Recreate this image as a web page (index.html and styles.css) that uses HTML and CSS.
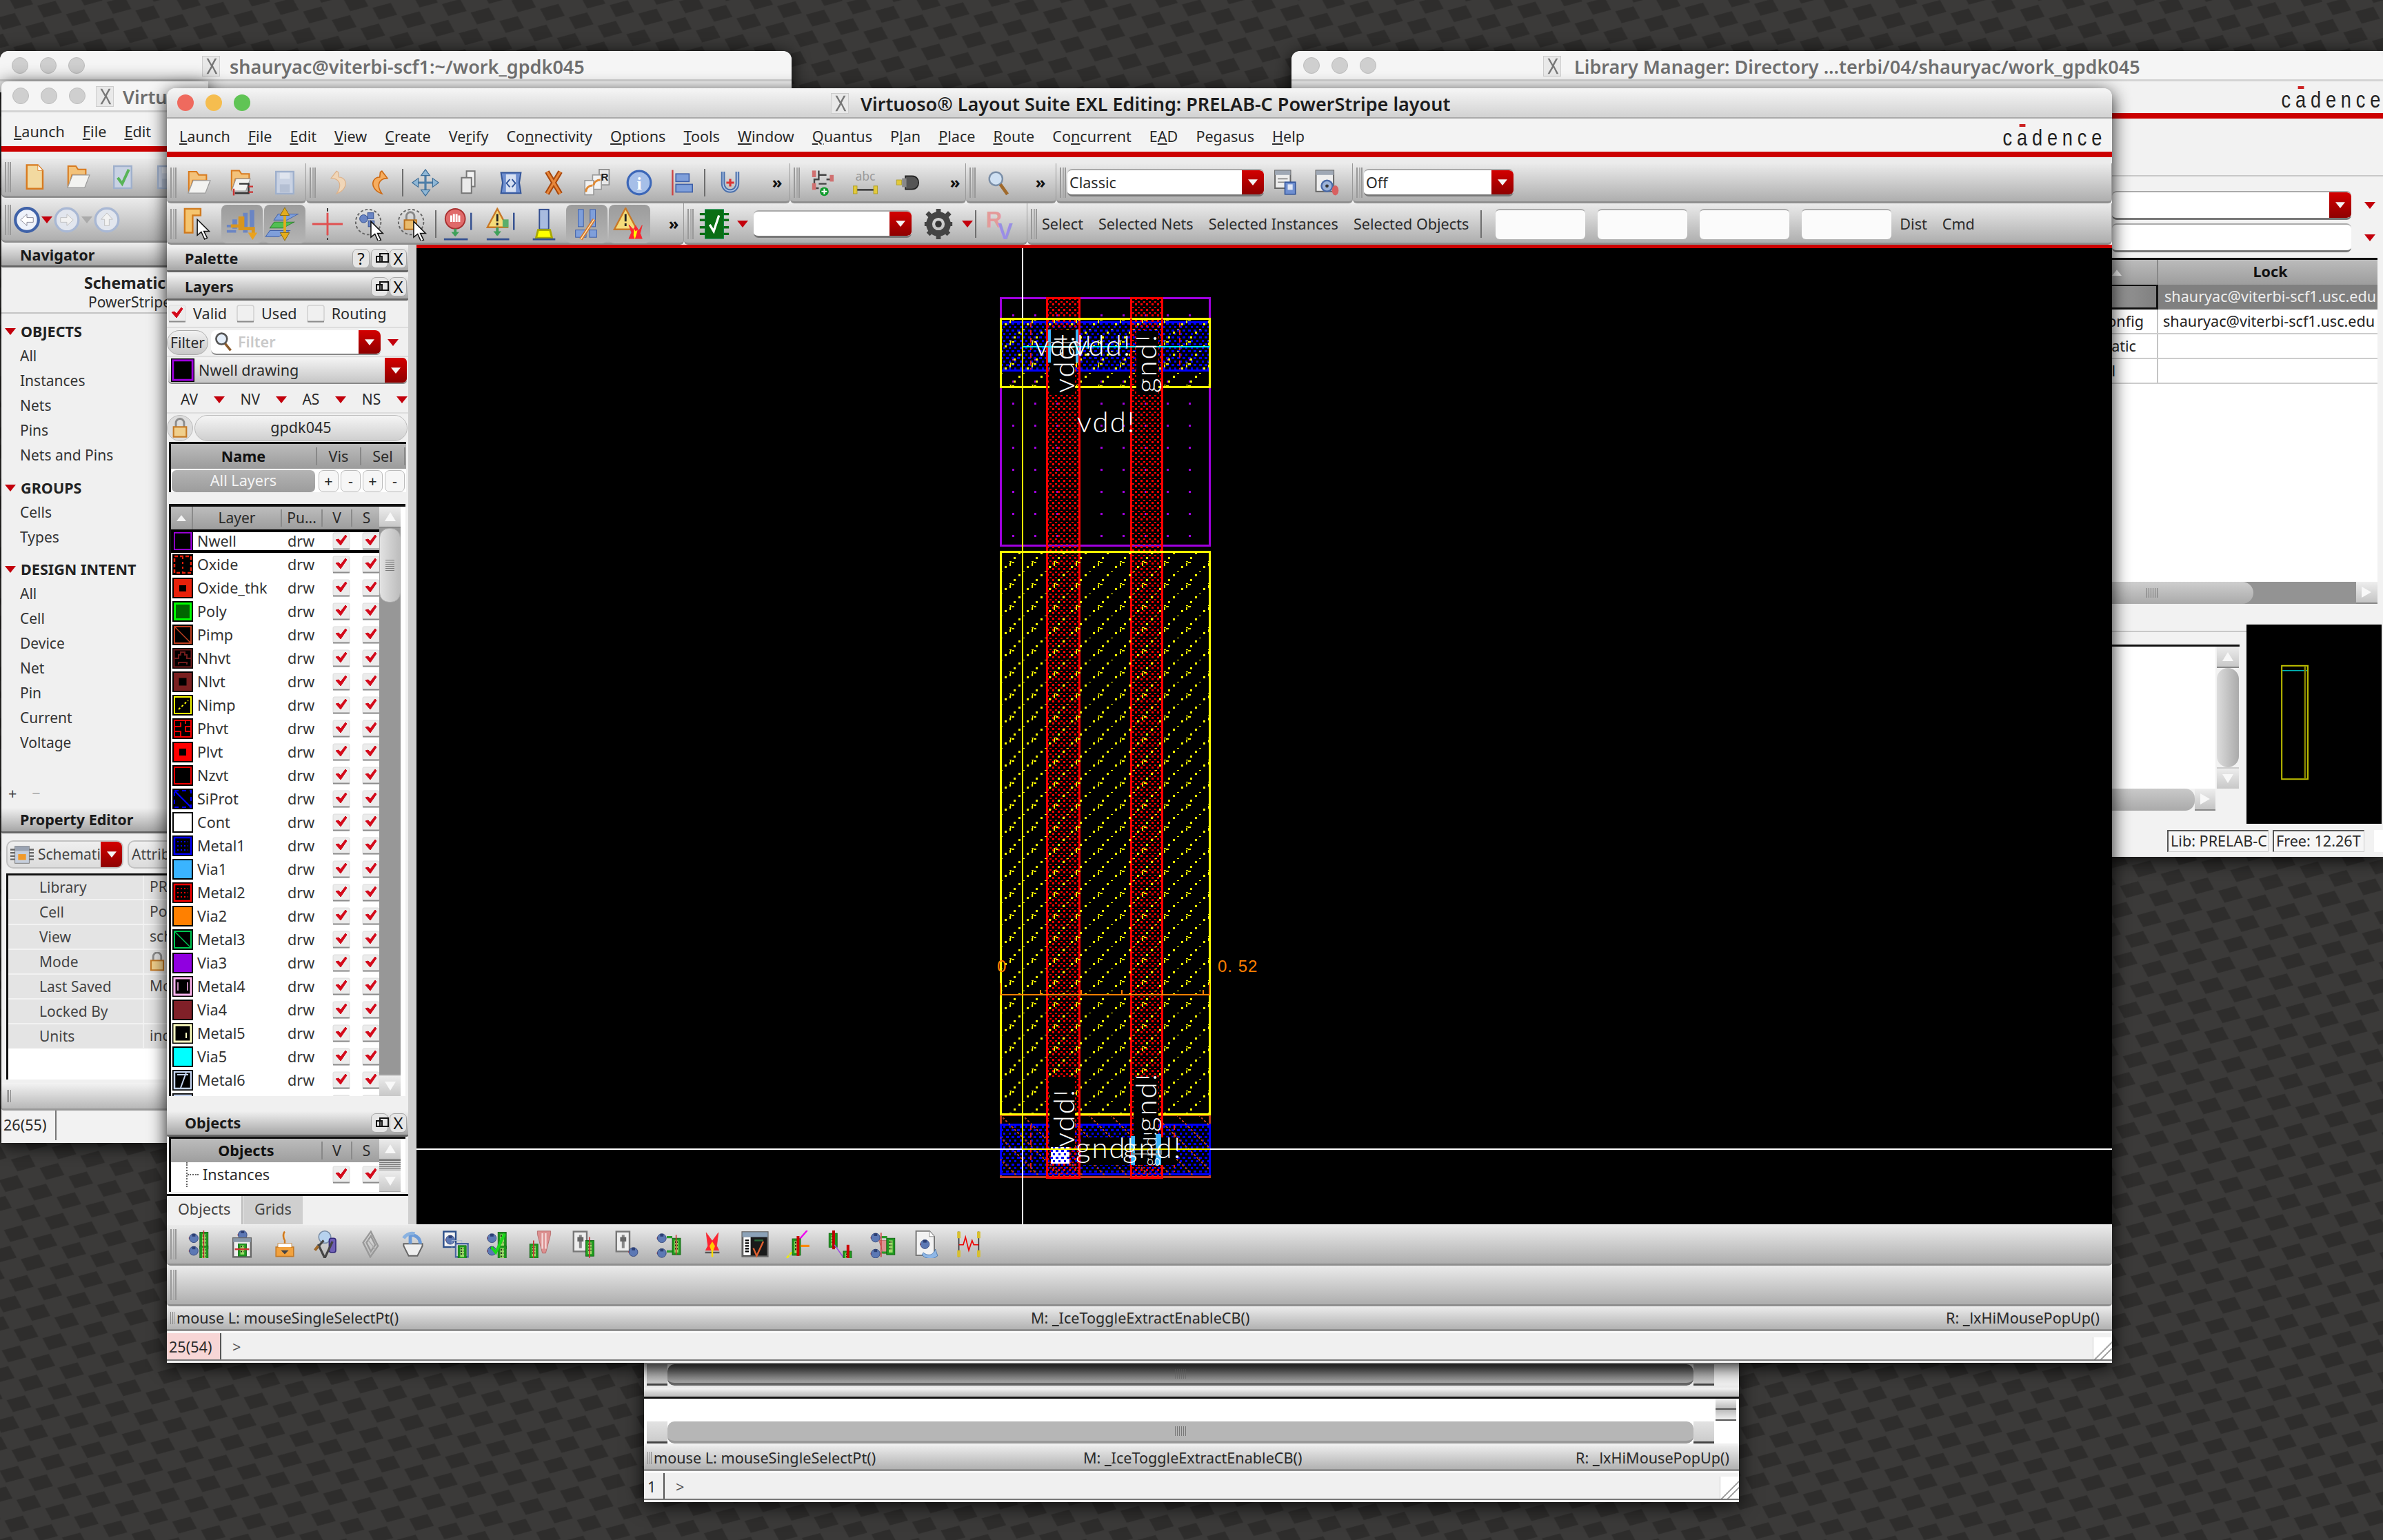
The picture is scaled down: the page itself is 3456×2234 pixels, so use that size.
FILE: index.html
```html
<!DOCTYPE html>
<html lang="en">
<head>
<meta charset="utf-8">
<title>Virtuoso Layout Suite EXL Editing</title>
<link rel="stylesheet" href="styles.css">
</head>
<body>
<svg class="defs" width="0" height="0">
<defs>
<pattern id="wall" width="100" height="100" patternUnits="userSpaceOnUse" patternTransform="matrix(.417 .123 -.173 .3 2764.5 1983.8)">
<rect width="100" height="100" fill="#3b3a39"/><polygon points="10,50 56,7 95.5,48.5 49.5,91.5" fill="#2e2d2c"/>
</pattern>
<g id="cur"><path d="M0 0v24l6-5 5 11 4-2-5-10h8z" fill="#fff" stroke="#111" stroke-width="1.6"/></g>
<g id="chp"><rect x="0" y="0" width="15" height="30" fill="#1f9a1f" stroke="#0a5a0a"/><rect x="4" y="4" width="7" height="22" fill="#9fdc6a"/><path d="M5 7h2M9 7h1M5 13h2M9 13h1M5 19h2M9 19h1" stroke="#111" stroke-width="3"/></g>
<g id="txr"><path d="M0 8h16" stroke="#c33" stroke-width="3"/><circle cx="9" cy="8" r="8" fill="#5c78b4" stroke="#2c3f74"/><rect x="6" y="0" width="6" height="5" fill="#2c3f74"/></g>
<g id="mag"><circle cx="16" cy="15" r="12" fill="#cfe0f2" stroke="#7b8fa8" stroke-width="3"/><path d="M24 25l13 18" stroke="#a06a2c" stroke-width="6"/></g>
</defs>
<symbol id="doc" viewBox="0 0 50 50"><path d="M11 3h20l9 10v33H11z" fill="#f2d9a0" stroke="#d87a1e" stroke-width="3"/><path d="M31 3v10h9" fill="#fff" stroke="#d87a1e"/></symbol>
<symbol id="folder" viewBox="0 0 50 50"><path d="M6 5h14l4 6h14v10L13 21 8 42H6z" fill="#f3c27a" stroke="#d87a1e" stroke-width="2.5"/><path d="M14 21h31l-9 23H5z" fill="#f3f3f1" stroke="#9a9a9a" stroke-width="1.5"/></symbol>
<symbol id="folderc" viewBox="0 0 50 50"><path d="M6 3h14l4 6h14v9H13L8 38H6z" fill="#f3c27a" stroke="#d87a1e" stroke-width="2.5"/><path d="M14 18h26l-8 22H6z" fill="#f3f3f1" stroke="#9a9a9a" stroke-width="1.5"/><path d="M20 27h17v17H26M12 44h14" fill="none" stroke="#333" stroke-width="3"/><path d="M37 32h8M37 42h8M10 36v12" stroke="#c33" stroke-width="3"/></symbol>
<symbol id="floppy" viewBox="0 0 50 50"><rect x="9" y="5" width="32" height="40" fill="#c9d2e3" stroke="#9fb0cc" stroke-width="3"/><rect x="16" y="7" width="18" height="11" fill="#dfe4ee"/><rect x="16" y="28" width="18" height="15" fill="#b4bfd3"/></symbol>
<symbol id="check" viewBox="0 0 50 50"><rect x="9" y="5" width="32" height="40" fill="#c9d2e3" stroke="#9fb0cc" stroke-width="3"/><path d="M16 26l8 11 12-26" fill="none" stroke="#58b458" stroke-width="5"/></symbol>
<symbol id="undo" viewBox="0 0 50 50"><path d="M22 4L12 17l7 1c10 4 12 14 3 27 14-5 19-16 15-24-3-5-8-6-11-6l-1-9z" fill="#f0d6b8" stroke="#ddb188" stroke-width="1.5"/></symbol>
<symbol id="redo" viewBox="0 0 50 50"><path d="M28 4l10 13-7 1c-10 4-12 14-3 27-14-5-19-16-15-24 3-5 8-6 11-6l1-9z" fill="#f6ad5f" stroke="#cd6a14" stroke-width="2"/></symbol>
<symbol id="move" viewBox="0 0 50 50"><path d="M25 8v34M8 25h34" stroke="#4d7ea8" stroke-width="4"/><path d="M25 1l8 11H17zM25 49l8-11H17zM1 25l11-8v16zM49 25l-11-8v16z" fill="#8fb7d6" stroke="#3d6e98" stroke-width="1.5"/></symbol>
<symbol id="copy" viewBox="0 0 50 50"><rect x="22" y="4" width="15" height="28" fill="#f4f4f4" stroke="#777" stroke-width="2.5"/><rect x="13" y="16" width="18" height="28" fill="#eaeaea" stroke="#777" stroke-width="2.5"/></symbol>
<symbol id="stretch" viewBox="0 0 50 50"><path d="M7 7h36l-3 18 3 19H7l3-19z" fill="#6f8fd0" stroke="#33559a" stroke-width="2.5"/><path d="M16 10h18v32H16z" fill="#d7e0f2"/><path d="M23 19l-6 7 6 7M27 19l6 7-6 7" fill="none" stroke="#33559a" stroke-width="2.5"/></symbol>
<symbol id="delete" viewBox="0 0 50 50"><path d="M13 5l24 40M37 5L13 45" stroke="#a8470c" stroke-width="9"/><path d="M13 5l24 40M37 5L13 45" stroke="#e8873a" stroke-width="4"/></symbol>
<symbol id="copyr" viewBox="0 0 50 50"><rect x="30" y="1" width="18" height="28" fill="#e8e8e8" stroke="#888" stroke-width="2"/><rect x="18" y="11" width="16" height="26" fill="#f2f2f2" stroke="#999" stroke-width="2"/><rect x="4" y="21" width="16" height="26" fill="#f2f2f2" stroke="#999" stroke-width="2"/><path d="M6 42c0-8 6-12 12-12M20 30c0-6 6-10 12-10" fill="none" stroke="#e08a35" stroke-width="3.5"/><text x="33" y="21" class="tx-r">R</text></symbol>
<symbol id="info" viewBox="0 0 50 50"><circle cx="25" cy="25" r="21" fill="#a6bfe8" stroke="#3c67b8" stroke-width="4"/><text x="25" y="37" class="tx-i">i</text></symbol>
<symbol id="align" viewBox="0 0 50 50"><path d="M8 2v46" stroke="#c44" stroke-width="3"/><rect x="14" y="9" width="24" height="14" fill="#7f9fda" stroke="#3e5fa8" stroke-width="2"/><rect x="14" y="28" width="30" height="14" fill="#7f9fda" stroke="#3e5fa8" stroke-width="2"/></symbol>
<symbol id="snap" viewBox="0 0 50 50"><path d="M12 5v22a13 13 0 0 0 26 0V5" fill="none" stroke="#4a70ac" stroke-width="7"/><path d="M12 5v22a13 13 0 0 0 26 0V5" fill="none" stroke="#b3c7e6" stroke-width="2"/><path d="M25 18v14M18 25h14" stroke="#d33" stroke-width="4"/></symbol>
<symbol id="pin" viewBox="0 0 50 50"><path d="M18 3v16h-8v16h8" fill="none" stroke="#444" stroke-width="3"/><path d="M18 11h14M18 27h14M32 19h10" stroke="#444" stroke-width="3"/><rect x="6" y="3" width="7" height="12" fill="#d07070"/><rect x="6" y="26" width="7" height="12" fill="#d07070"/><rect x="38" y="11" width="7" height="12" fill="#d07070"/><circle cx="28" cy="41" r="8" fill="#0d9a2a"/><path d="M28 36v10M23 41h10" stroke="#fff" stroke-width="2.5"/></symbol>
<symbol id="abc" viewBox="0 0 50 50"><text x="25" y="21" class="tx-abc">abc</text><path d="M6 38h38" stroke="#333" stroke-width="3"/><rect x="3" y="31" width="7" height="14" fill="#e2c93a" stroke="#aa9a20"/><rect x="40" y="31" width="7" height="14" fill="#e2c93a" stroke="#aa9a20"/></symbol>
<symbol id="term" viewBox="0 0 50 50"><path d="M20 13h12c8 0 12 6 12 12s-4 12-12 12H20z" fill="#555" stroke="#222" stroke-width="2"/><rect x="14" y="17" width="8" height="16" fill="#888"/><rect x="4" y="20" width="9" height="9" fill="#e2c93a" stroke="#aa9a20"/></symbol>
<symbol id="zoom" viewBox="0 0 50 50"><use href="#mag" x="5" y="3"/></symbol>
<symbol id="winp" viewBox="0 0 50 50"><rect x="7" y="3" width="28" height="32" fill="#eee" stroke="#666" stroke-width="2.5"/><rect x="7" y="3" width="28" height="8" fill="#9fa8b5"/><path d="M12 18h18M12 24h12" stroke="#888" stroke-width="2"/><rect x="25" y="24" width="19" height="22" fill="#6f8fd0" stroke="#33559a" stroke-width="2"/><rect x="30" y="28" width="9" height="10" fill="#dfe6f5"/></symbol>
<symbol id="winq" viewBox="0 0 50 50"><rect x="5" y="3" width="32" height="38" fill="#eee" stroke="#666" stroke-width="2.5"/><rect x="5" y="3" width="32" height="8" fill="#9fa8b5"/><circle cx="25" cy="31" r="10" fill="#9db3d8" stroke="#4a6aa8" stroke-width="3"/><circle cx="25" cy="31" r="3" fill="#333"/><ellipse cx="40" cy="39" rx="6" ry="9" fill="#d86060"/></symbol>
<symbol id="sel" viewBox="0 0 50 50"><path d="M3 2h24v10h-12v26H3z" fill="#f5c56f" stroke="#d07a1e" stroke-width="2.5"/><use href="#cur" x="22" y="18"/></symbol>
<symbol id="route" viewBox="0 0 50 50"><path d="M14 18v14M30 8v30M40 4v28" stroke="#6a85c4" stroke-width="7"/><path d="M2 28h14M2 36h14" stroke="#6a85c4" stroke-width="4"/><path d="M8 28h18V16h-4v16h20v8" fill="none" stroke="#d9961e" stroke-width="5"/><path d="M34 38h14l-7 11z" fill="#e9a21f"/></symbol>
<symbol id="via" viewBox="0 0 50 50"><path d="M10 10l30 0-12 9H8z" fill="#7f9fda" stroke="#3e5fa8" transform="matrix(1 0 -.5 1 10 0)"/><path d="M10 22h30l-12 9H8z" fill="#52c052" stroke="#2a7a2a" transform="matrix(1 0 -.5 1 10 0)"/><path d="M10 35h30l-12 9H8z" fill="#7f9fda" stroke="#3e5fa8" transform="matrix(1 0 -.5 1 10 0)"/><path d="M25 6v38" stroke="#e3ac1d" stroke-width="4"/><path d="M25 0l7 12H18zM25 50l7-12H18z" fill="#e3ac1d" stroke="#8a6a10"/></symbol>
<symbol id="cross" viewBox="0 0 50 50"><path d="M25 1v48" stroke="#333" stroke-width="2" stroke-dasharray="5 4"/><path d="M2 25h46M25 8v34" stroke="#e05050" stroke-width="3"/></symbol>
<symbol id="selfig" viewBox="0 0 50 50"><circle cx="22" cy="22" r="19" fill="none" stroke="#666" stroke-width="2" stroke-dasharray="4 3"/><circle cx="15" cy="17" r="6" fill="#6a85c4" stroke="#334f90"/><rect x="21" y="8" width="9" height="9" fill="#6a85c4" stroke="#334f90"/><rect x="22" y="20" width="9" height="9" fill="#6a85c4" stroke="#334f90"/><use href="#cur" x="26" y="21"/></symbol>
<symbol id="sellock" viewBox="0 0 50 50"><circle cx="22" cy="22" r="19" fill="none" stroke="#666" stroke-width="2" stroke-dasharray="4 3"/><path d="M15 20v-7a6 6 0 0 1 12 0v7" fill="none" stroke="#888" stroke-width="3"/><rect x="12" y="19" width="18" height="14" fill="#e9bb6c" stroke="#b8701e" stroke-width="2"/><use href="#cur" x="26" y="21"/></symbol>
<symbol id="stop" viewBox="0 0 50 50"><circle cx="20" cy="17" r="15" fill="#e06a6a" stroke="#a83030" stroke-width="2"/><path d="M14 22v-10M18 22v-12M22 22v-12M26 22v-10" stroke="#fff" stroke-width="3"/><path d="M20 32v10" stroke="#3fa05a" stroke-width="4"/><path d="M14 37h12l-6 7z" fill="#3fa05a"/><path d="M3 48h36" stroke="#334f90" stroke-width="3"/><path d="M44 8v26" stroke="#334f90" stroke-width="2.5"/></symbol>
<symbol id="warnp" viewBox="0 0 50 50"><path d="M19 2l15 28H4z" fill="#f5dc7a" stroke="#c87828" stroke-width="2.5"/><path d="M19 10v11M19 23v4" stroke="#222" stroke-width="3"/><path d="M19 30v12" stroke="#3fa05a" stroke-width="4"/><path d="M13 36h12l-6 7z" fill="#3fa05a"/><path d="M3 48h34" stroke="#334f90" stroke-width="3"/><path d="M44 8v26" stroke="#334f90" stroke-width="2.5"/><rect x="27" y="18" width="9" height="12" fill="#5cae6a"/></symbol>
<symbol id="pole" viewBox="0 0 50 50"><rect x="18" y="3" width="14" height="30" fill="#a9bcdf" stroke="#334f90" stroke-width="2"/><path d="M16 34h18l3 12H13z" fill="#ff0" stroke="#aa0" stroke-width="3"/><path d="M8 48h34" stroke="#334f90" stroke-width="3"/></symbol>
<symbol id="pen" viewBox="0 0 50 50"><rect x="12" y="3" width="8" height="26" fill="#7f9fda" stroke="#3e5fa8"/><rect x="30" y="3" width="8" height="26" fill="#7f9fda" stroke="#3e5fa8"/><rect x="8" y="34" width="16" height="11" fill="#7f9fda" stroke="#3e5fa8"/><rect x="29" y="34" width="11" height="11" fill="#7f9fda" stroke="#3e5fa8"/><path d="M16 48L36 18" stroke="#d8782a" stroke-width="5"/><path d="M16 48L36 18" stroke="#ffe9b8" stroke-width="1.5"/></symbol>
<symbol id="warnx" viewBox="0 0 50 50"><path d="M19 1l17 32H2z" fill="#f5dc7a" stroke="#c87828" stroke-width="2.5"/><path d="M19 10v11M19 24v4" stroke="#222" stroke-width="3"/><path d="M24 26l7 8 3-7 5 8 5-8-3 12 3 8H24l4-9z" fill="#f23" stroke="#e33"/><path d="M32 32l2 4 3-2-2 8 -2 6-2-6z" fill="#ff0"/></symbol>
<symbol id="gchip" viewBox="0 0 50 50"><rect x="11" y="3" width="28" height="44" fill="#0a6e14" stroke="#084" stroke-width="1"/><path d="M3 10h8M3 19h8M3 30h8M3 40h8M39 10h8M39 19h8M39 30h8M39 40h8" stroke="#0a6e14" stroke-width="3.5"/><path d="M18 26l6 10 8-24" fill="none" stroke="#fff" stroke-width="3.5"/></symbol>
<symbol id="gear" viewBox="0 0 50 50"><circle cx="25" cy="25" r="14" fill="none" stroke="#444" stroke-width="9"/><path d="M25 2v46M8 8l34 34M42 8L8 42" stroke="#444" stroke-width="7" stroke-dasharray="7 32"/><path d="M4 25h42M25 4v42" stroke="#444" stroke-width="6" stroke-dasharray="6 30"/><circle cx="25" cy="25" r="5" fill="#333"/></symbol>
<symbol id="rv" viewBox="0 0 50 50"><text x="4" y="30" class="tx-rv1">R</text><text x="22" y="48" class="tx-rv2">V</text></symbol>
<symbol id="bk" viewBox="0 0 50 50"><circle cx="25" cy="25" r="20" fill="#eef2fa" stroke="#3f62a8" stroke-width="5"/><path d="M14 25l11-10v6h11v8H25v6z" fill="#fff" stroke="#778"/></symbol>
<symbol id="bkd" viewBox="0 0 50 50"><circle cx="25" cy="25" r="20" fill="#e2e6ee" stroke="#a9b8d4" stroke-width="4"/><path d="M36 25l-11-10v6H14v8h11v6z" fill="#f2f2f2" stroke="#bbb"/></symbol>
<symbol id="upd" viewBox="0 0 50 50"><circle cx="25" cy="25" r="20" fill="#e2e6ee" stroke="#a9b8d4" stroke-width="4"/><path d="M25 13l-10 11h6v11h8V24h6z" fill="#f2f2f2" stroke="#bbb"/></symbol>
<symbol id="x11" viewBox="0 0 28 32"><rect width="28" height="32" fill="#e9e9e9" stroke="#ccc" stroke-width="2"/><path d="M7 4l7 12-7 12h3l6-10 5 10h3l-7-13 6-11h-3l-5 9-5-9z" fill="#777"/></symbol>
<symbol id="cb" viewBox="0 0 26 26"><rect x="1" y="1" width="24" height="24" rx="2" fill="#ececec" stroke="#dcdcdc"/><path d="M1 24.5h24" stroke="#8c8c8c" stroke-width="2"/><path d="M5 11l4-1 3 3 7-9 2 2-9 13z" fill="#d4091a" stroke="#d4091a"/></symbol>
<symbol id="cb0" viewBox="0 0 26 26"><rect x="1" y="1" width="24" height="24" rx="3" fill="#f0f0f0" stroke="#d0d0d0" stroke-width="1.5"/><path d="M1 24.5h24" stroke="#8c8c8c" stroke-width="2"/></symbol>
<symbol id="tri" viewBox="0 0 16 10"><path d="M0 0h16l-8 10z" fill="#c3000c"/></symbol>
<symbol id="trig" viewBox="0 0 16 10"><path d="M0 0h16l-8 10z" fill="#aaa"/></symbol>
<symbol id="wtri" viewBox="0 0 16 10"><path d="M0 0h16l-8 10z" fill="#f4f4f4"/></symbol>
<symbol id="lockic" viewBox="0 0 26 34"><path d="M6 17V8a7 7 0 0 1 14 0v9" fill="none" stroke="#8d8d8d" stroke-width="3.5"/><rect x="2" y="15" width="22" height="17" fill="#f0cf8c" stroke="#c47a26" stroke-width="2.5"/></symbol>
<symbol id="searchic" viewBox="0 0 30 34"><circle cx="12" cy="12" r="9" fill="#e4eefa" stroke="#555" stroke-width="3"/><path d="M18 20l9 11" stroke="#8b5a2b" stroke-width="4"/></symbol>
<symbol id="smic" viewBox="0 0 36 30"><rect x="7" y="2" width="22" height="26" fill="#c6cfdd" stroke="#777"/><rect x="7" y="2" width="22" height="7" fill="#9aa3b2"/><rect x="12" y="14" width="12" height="9" fill="#f09a2c"/><path d="M0 7h7M0 12h7M0 17h7M0 22h7M29 7h7M29 12h7M29 17h7M29 22h7" stroke="#666" stroke-width="2.5"/></symbol>
<symbol id="t1" viewBox="0 0 50 50"><use href="#txr" x="6" y="6"/><use href="#txr" x="6" y="29"/><use href="#chp" x="26" y="3"/><use href="#chp" x="26" y="28"/><path d="M33 0v50" stroke="#c33" stroke-width="2"/></symbol>
<symbol id="t2" viewBox="0 0 50 50"><use href="#txr" x="17" y="0"/><rect x="9" y="14" width="32" height="34" fill="#eee" stroke="#666" stroke-width="3"/><rect x="9" y="14" width="32" height="7" fill="#8a98a8"/><use href="#chp" x="18" y="24" transform="scale(1 .75) translate(0 8)"/><path d="M12 34h26" stroke="#c33" stroke-width="3"/></symbol>
<symbol id="t3" viewBox="0 0 50 50"><path d="M25 2c-4 4-3 12 0 16v10" fill="#f4c080" stroke="#d07a1e" stroke-width="3"/><path d="M13 24h24v6h4v17H9V30h4z" fill="#f2a23e" stroke="#c47a26" stroke-width="2"/><path d="M13 24h24v6H13z" fill="#fff"/><path d="M18 36h14l-7 7z" fill="#444"/></symbol>
<symbol id="t4" viewBox="0 0 50 50"><circle cx="20" cy="12" r="11" fill="#b7d2ee" stroke="#7b8fa8" stroke-width="2"/><rect x="28" y="14" width="12" height="26" rx="4" fill="#6f5fb4" stroke="#332a7a" stroke-width="2"/><path d="M4 34L18 18M8 25l12 25 14-30" fill="none" stroke="#444" stroke-width="4"/><path d="M2 36l6-8" stroke="#a06a2c" stroke-width="5"/></symbol>
<symbol id="t5" viewBox="0 0 50 50"><path d="M26 2L12 22l13 26 14-20zM26 10l-8 12 8 16 8-12z" fill="none" stroke="#999" stroke-width="3"/><path d="M20 16l14 18" stroke="#aaa" stroke-width="2"/></symbol>
<symbol id="t6" viewBox="0 0 50 50"><path d="M8 28l9 18h16l9-18V24H8z" fill="#eee" stroke="#666" stroke-width="2.5"/><path d="M20 24V8c8 0 18 4 18 16" fill="none" stroke="#6a9ad8" stroke-width="6"/><path d="M8 14c5-8 14-10 20-8" fill="none" stroke="#8ab2e0" stroke-width="6"/></symbol>
<symbol id="t7" viewBox="0 0 50 50"><rect x="3" y="2" width="22" height="28" fill="#f4f4f4" stroke="#2c4f8a" stroke-width="3"/><use href="#txr" x="6" y="9"/><rect x="18" y="18" width="18" height="14" fill="none" stroke="#b0bdd4"/><rect x="25" y="24" width="22" height="24" fill="#f4f4f4" stroke="#4a64a0" stroke-width="3"/><use href="#chp" x="29" y="27" transform="scale(1 .8) translate(0 7)"/></symbol>
<symbol id="t8" viewBox="0 0 50 50"><use href="#txr" x="4" y="6"/><use href="#txr" x="4" y="29"/><use href="#chp" x="24" y="3"/><use href="#chp" x="24" y="28"/><path d="M12 30l8 10L36 6" fill="none" stroke="#1ad81a" stroke-width="5"/></symbol>
<symbol id="t9" viewBox="0 0 50 50"><path d="M18 1h24v6l-9 34h-6L18 7z" fill="#dc9090" stroke="#b06060"/><path d="M27 5v28M33 5v28" stroke="#f4d8d8" stroke-width="3"/><use href="#chp" x="4" y="20" transform="scale(1 .85) translate(0 9)"/><path d="M11 18v32" stroke="#c33" stroke-width="2"/></symbol>
<symbol id="t10" viewBox="0 0 50 50"><rect x="6" y="2" width="24" height="36" fill="#eee" stroke="#777" stroke-width="3"/><rect x="16" y="8" width="5" height="24" fill="#888"/><rect x="13" y="12" width="11" height="8" fill="#666"/><use href="#chp" x="28" y="19" transform="scale(1 .95)"/><path d="M35 12v38" stroke="#c33" stroke-width="2"/></symbol>
<symbol id="t11" viewBox="0 0 50 50"><rect x="6" y="2" width="24" height="36" fill="#eee" stroke="#777" stroke-width="3"/><rect x="16" y="8" width="5" height="24" fill="#888"/><rect x="13" y="12" width="11" height="8" fill="#666"/><use href="#txr" x="28" y="31"/></symbol>
<symbol id="t12" viewBox="0 0 50 50"><use href="#txr" x="2" y="6"/><use href="#txr" x="2" y="33"/><path d="M20 12h10M20 38h10" stroke="#2a9a2a" stroke-width="4"/><use href="#chp" x="30" y="14"/><path d="M37 8v36" stroke="#c33" stroke-width="2"/></symbol>
<symbol id="t13" viewBox="0 0 50 50"><path d="M14 4l11 15L36 4l-3 24 4 8H13l4-8z" fill="#f23" stroke="#e33"/><path d="M25 20l5 8-3 8h-4l-3-8z" fill="#fc0"/><path d="M12 40h26" stroke="#555" stroke-width="3"/><path d="M25 34v14" stroke="#fd0" stroke-width="3"/></symbol>
<symbol id="t14" viewBox="0 0 50 50"><rect x="2" y="3" width="46" height="44" fill="#1a1a1a" stroke="#666" stroke-width="3"/><rect x="2" y="3" width="46" height="9" fill="#8ca2b8"/><rect x="4" y="12" width="13" height="33" fill="#fff"/><path d="M7 18h7M7 23h7M7 28h7M7 33h7M7 38h7" stroke="#000" stroke-width="3"/><path d="M22 32l6 14 12-26" fill="none" stroke="#e06030" stroke-width="3"/><path d="M24 18h16" stroke="#2a6a3a" stroke-width="3"/></symbol>
<symbol id="t15" viewBox="0 0 50 50"><path d="M5 50l14-16" stroke="#ee0" stroke-width="3" stroke-dasharray="6 2"/><path d="M28 16L42 0" stroke="#e0e" stroke-width="3"/><use href="#chp" x="15" y="15"/><rect x="23" y="10" width="5" height="36" fill="#c00"/><path d="M30 28h16" stroke="#f80" stroke-width="4"/></symbol>
<symbol id="t16" viewBox="0 0 50 50"><use href="#chp" x="4" y="6" transform="scale(1 .85)"/><rect x="10" y="0" width="5" height="34" fill="#b00"/><path d="M14 26l17 24" stroke="#a050e0" stroke-width="2"/><use href="#chp" x="30" y="28" transform="scale(1 .78) translate(0 20)"/><rect x="36" y="26" width="5" height="26" fill="#c00"/></symbol>
<symbol id="t17" viewBox="0 0 50 50"><use href="#txr" x="2" y="5"/><use href="#txr" x="2" y="34"/><path d="M17 18h22l-6 24h-8z" fill="#dc9090" stroke="#b06060"/><path d="M22 12h10M22 40h10" stroke="#2a9a2a" stroke-width="4"/><use href="#chp" x="31" y="14"/><path d="M21 4v44" stroke="#c33" stroke-width="2"/></symbol>
<symbol id="t18" viewBox="0 0 50 50"><path d="M7 1h24l9 10v34H7z" fill="#f2f2f2" stroke="#777" stroke-width="2.5"/><path d="M31 1v10h9" fill="#fff" stroke="#777"/><use href="#txr" x="14" y="17"/><path d="M20 40c10 8 18 4 22-6l4 12-6 4c-10 2-18 0-22-6z" fill="#8fb7e6" stroke="#3d6ea8"/></symbol>
<symbol id="t19" viewBox="0 0 50 50"><path d="M7 2v46M43 2v46" stroke="#333" stroke-width="2"/><rect x="4" y="2" width="6" height="12" fill="#d8c030"/><rect x="40" y="2" width="6" height="12" fill="#d8c030"/><rect x="4" y="36" width="6" height="12" fill="#d8c030"/><rect x="40" y="36" width="6" height="12" fill="#d8c030"/><path d="M7 26h8l4-14 6 24 6-18 3 8h9" fill="none" stroke="#e00" stroke-width="2"/></symbol>
<symbol id="s-nwell" viewBox="0 0 30 30"><rect width="30" height="30"/><rect x="2.5" y="2.5" width="25" height="25" fill="none" stroke="#a000e0" stroke-width="2.5"/></symbol>
<symbol id="s-oxide" viewBox="0 0 30 30"><rect width="30" height="30"/><rect x="3" y="3" width="24" height="24" fill="none" stroke="#e8200a" stroke-width="2.5" stroke-dasharray="5 3"/><path d="M15 4v22" stroke="#e8200a" stroke-width="2" stroke-dasharray="3 4"/></symbol>
<symbol id="s-oxthk" viewBox="0 0 30 30"><rect width="30" height="30"/><rect x="2" y="2" width="26" height="26" fill="#e8200a"/><path d="M10 11h10v9H10z"/></symbol>
<symbol id="s-poly" viewBox="0 0 30 30"><rect width="30" height="30"/><rect x="2" y="2" width="26" height="26" fill="#0f0"/><rect x="5" y="5" width="20" height="20" fill="#060"/></symbol>
<symbol id="s-pimp" viewBox="0 0 30 30"><rect width="30" height="30"/><rect x="3" y="3" width="24" height="24" fill="none" stroke="#c04020" stroke-width="2"/><path d="M3 3l24 24" stroke="#c04020" stroke-width="1.5"/></symbol>
<symbol id="s-nhvt" viewBox="0 0 30 30"><rect width="30" height="30"/><rect x="2.5" y="2.5" width="25" height="25" fill="none" stroke="#701c1c" stroke-width="2"/><path d="M3 15h6v-5h3V6h6v4h3v5h6M9 24v-3h12v3" fill="none" stroke="#701c1c" stroke-width="2"/></symbol>
<symbol id="s-nlvt" viewBox="0 0 30 30"><rect width="30" height="30"/><rect x="7" y="7" width="16" height="16" fill="none" stroke="#7a2020" stroke-width="5"/><rect x="4" y="4" width="22" height="22" fill="none" stroke="#7a2020" stroke-width="4"/></symbol>
<symbol id="s-nimp" viewBox="0 0 30 30"><rect width="30" height="30"/><rect x="3" y="3" width="24" height="24" fill="none" stroke="#ff0" stroke-width="2"/><path d="M9 21l14-13" stroke="#ff0" stroke-width="2" stroke-dasharray="3 3"/></symbol>
<symbol id="s-phvt" viewBox="0 0 30 30"><rect width="30" height="30"/><rect x="3" y="3" width="24" height="24" fill="none" stroke="#f00" stroke-width="2"/><path d="M4 12h8V6M26 12h-7v7h7M4 19h8v7M19 4v4" fill="none" stroke="#f00" stroke-width="2"/></symbol>
<symbol id="s-plvt" viewBox="0 0 30 30"><rect width="30" height="30"/><rect x="6" y="6" width="18" height="18" fill="none" stroke="#f00" stroke-width="8"/></symbol>
<symbol id="s-nzvt" viewBox="0 0 30 30"><rect width="30" height="30"/><rect x="3" y="3" width="24" height="24" fill="none" stroke="#e00" stroke-width="2"/></symbol>
<symbol id="s-siprot" viewBox="0 0 30 30"><rect width="30" height="30"/><rect x="3" y="3" width="24" height="24" fill="none" stroke="#00f" stroke-width="2" stroke-dasharray="6 5"/><path d="M3 3l24 24" stroke="#00f" stroke-width="2"/></symbol>
<symbol id="s-cont" viewBox="0 0 30 30"><rect width="30" height="30"/><rect x="2" y="2" width="26" height="26" fill="#fff"/></symbol>
<symbol id="s-m1" viewBox="0 0 30 30"><rect width="30" height="30"/><rect x="3" y="3" width="24" height="24" fill="none" stroke="#00f" stroke-width="2.5"/><path d="M7 9h16M7 15h16M7 21h16" stroke="#00f" stroke-width="2" stroke-dasharray="2 3"/></symbol>
<symbol id="s-via1" viewBox="0 0 30 30"><rect width="30" height="30"/><rect x="2" y="2" width="26" height="26" fill="#3ab4ff"/></symbol>
<symbol id="s-m2" viewBox="0 0 30 30"><rect width="30" height="30"/><rect x="3" y="3" width="24" height="24" fill="none" stroke="#f00" stroke-width="2.5"/><path d="M7 9h16M7 15h16M7 21h16" stroke="#f00" stroke-width="2" stroke-dasharray="2 3"/></symbol>
<symbol id="s-via2" viewBox="0 0 30 30"><rect width="30" height="30"/><rect x="2" y="2" width="26" height="26" fill="#ff8000"/></symbol>
<symbol id="s-m3" viewBox="0 0 30 30"><rect width="30" height="30"/><rect x="3" y="3" width="24" height="24" fill="none" stroke="#00c853" stroke-width="2"/><path d="M3 3l24 24" stroke="#00c853" stroke-width="1.5"/></symbol>
<symbol id="s-via3" viewBox="0 0 30 30"><rect width="30" height="30"/><rect x="2" y="2" width="26" height="26" fill="#9000e0"/></symbol>
<symbol id="s-m4" viewBox="0 0 30 30"><rect width="30" height="30"/><rect x="3" y="3" width="24" height="24" fill="none" stroke="#ffb4ef" stroke-width="3"/><path d="M8 9v12M22 9v12" stroke="#ffb4ef" stroke-width="1.5"/></symbol>
<symbol id="s-via4" viewBox="0 0 30 30"><rect width="30" height="30"/><rect x="2" y="2" width="26" height="26" fill="#802028"/></symbol>
<symbol id="s-m5" viewBox="0 0 30 30"><rect width="30" height="30"/><rect x="3" y="3" width="24" height="24" fill="none" stroke="#ffffc0" stroke-width="3"/><path d="M20 14v8" stroke="#ffffc0" stroke-width="2"/></symbol>
<symbol id="s-via5" viewBox="0 0 30 30"><rect width="30" height="30"/><rect x="2" y="2" width="26" height="26" fill="#0ff"/></symbol>
<symbol id="s-m6" viewBox="0 0 30 30"><rect width="30" height="30"/><rect x="3" y="3" width="24" height="24" fill="none" stroke="#c4d4f0" stroke-width="2.5"/><path d="M12 26l8-22M7 7h16" stroke="#c4d4f0" stroke-width="2"/></symbol>
</svg>

<div class="desktop">
<svg class="wallpaper" width="3456" height="2234"><rect width="3456" height="2234" fill="url(#wall)"/></svg>

<section class="win win-term">
  <header class="ttl ttl-in">
    <i class="dot d-in"></i><i class="dot d-in"></i><i class="dot d-in"></i>
    <svg class="x11 x-term"><use href="#x11"/></svg><span class="ttl-tx in">shauryac@viterbi-scf1:~/work_gpdk045</span>
  </header>
</section>

<section class="win win-lib">
  <header class="ttl ttl-in">
    <i class="dot d-in"></i><i class="dot d-in"></i><i class="dot d-in"></i>
    <svg class="x11 x-lib"><use href="#x11"/></svg><span class="ttl-tx in">Library Manager: Directory ...terbi/04/shauryac/work_gpdk045</span>
  </header>
  <div class="logo-row logo-lib"><span class="logo">c<b class="logo-a">a</b>dence</span></div>
  <div class="red"></div>
  <div class="lib-body">
    <div class="lib-rule"></div>
    <div class="lib-combo-row"><div class="combo combo-lib"><span class="combo-tx"></span><span class="combo-btn"><svg class="wt"><use href="#wtri"/></svg></span></div><svg class="rt"><use href="#tri"/></svg></div>
    <div class="lib-combo-row"><div class="combo combo-lib"><span class="combo-tx"></span></div><svg class="rt"><use href="#tri"/></svg></div>
    <div class="lib-table">
      <div class="lib-head"><div class="lib-c1 lib-h-sort"><svg class="sorttri"><use href="#wtri"/></svg></div><div class="lib-c2 lib-h-lock">Lock</div></div>
      <div class="lib-row lib-sel"><div class="lib-c1 lib-sel-c"></div><div class="lib-c2 lib-sel-l">shauryac@viterbi-scf1.usc.edu</div></div>
      <div class="lib-row"><div class="lib-c1 e1">config</div><div class="lib-c2">shauryac@viterbi-scf1.usc.edu</div></div>
      <div class="lib-row"><div class="lib-c1 e2">schematic</div><div class="lib-c2"></div></div>
      <div class="lib-row"><div class="lib-c1 e3">symbol</div><div class="lib-c2"></div></div>
      <div class="lib-fill"></div>
      <div class="lib-hs"><div class="lib-hs-th"><span class="grip-v"></span></div><div class="lib-hs-tr"></div><div class="lib-arrow"></div></div>
    </div>
    <div class="lib-lower">
      <div class="lib-lower-l">
        <div class="lib-lrule"></div>
        <div class="lib-box">
          <div class="lib-box-w"></div>
          <div class="lib-vs"><i class="vs-cap"></i><i class="vs-th"></i><i class="vs-cap dn"></i></div>
        </div>
        <div class="lib-hs2"><div class="lib-hs2-th"></div><div class="lib-arrow a2"></div></div>
      </div>
      <div class="preview"><svg class="prev-svg" viewBox="0 0 196 290"><rect x="51" y="60" width="38" height="165" fill="none" stroke="#c0c000" stroke-width="2"/><path d="M52 67h36" stroke="#00b8b8" stroke-width="1.5"/><path d="M85 61v163" stroke="#808000" stroke-width="3"/></svg></div>
    </div>
    <div class="lib-status"><span class="lib-f lf1">Lib: PRELAB-C</span><span class="lib-f lf2">Free: 12.26T</span><span class="lib-grip"></span></div>
  </div>
</section>

<section class="win win-schem">
  <header class="ttl ttl-in ttl-s">
    <i class="dot d-in"></i><i class="dot d-in"></i><i class="dot d-in"></i>
    <svg class="x11 x-sch"><use href="#x11"/></svg><span class="ttl-tx in">Virtuoso</span>
  </header>
  <nav class="menu menu-s"><span><u>L</u>aunch</span><span><u>F</u>ile</span><span><u>E</u>dit</span></nav>
  <div class="red"></div>
  <div class="tb tb-s1">
    <span class="hdl"></span><svg class="tool s"><use href="#doc"/></svg><svg class="tool s"><use href="#folder"/></svg><svg class="tool s"><use href="#check"/></svg><svg class="tool s"><use href="#floppy"/></svg>
  </div>
  <div class="tb tb-s2"><span class="hdl"></span><svg class="tool b"><use href="#bk"/></svg><svg class="rt mr"><use href="#tri"/></svg><svg class="tool b"><use href="#bkd"/></svg><svg class="rt mr"><use href="#trig"/></svg><svg class="tool b"><use href="#upd"/></svg></div>
  <div class="dock-h nav-h"><span>Navigator</span></div>
  <div class="nav-body">
    <div class="nav-ttl"><b>Schematic</b><span>PowerStripe</span></div>
    <div class="nav-sec"><svg class="rt2"><use href="#tri"/></svg><b>OBJECTS</b></div>
    <div class="nav-it">All</div><div class="nav-it">Instances</div><div class="nav-it">Nets</div><div class="nav-it">Pins</div><div class="nav-it">Nets and Pins</div>
    <div class="nav-sec s2"><svg class="rt2"><use href="#tri"/></svg><b>GROUPS</b></div>
    <div class="nav-it">Cells</div><div class="nav-it">Types</div>
    <div class="nav-sec s2 s3"><svg class="rt2"><use href="#tri"/></svg><b>DESIGN INTENT</b></div>
    <div class="nav-it">All</div><div class="nav-it">Cell</div><div class="nav-it">Device</div><div class="nav-it">Net</div><div class="nav-it">Pin</div><div class="nav-it">Current</div><div class="nav-it">Voltage</div>
    <div class="nav-pm"><span>+</span><span class="dim">−</span></div>
  </div>
  <div class="dock-h prop-h"><span>Property Editor</span></div>
  <div class="prop-combos">
    <div class="pill"><svg class="smic"><use href="#smic"/></svg><span>Schemati</span><span class="combo-btn cb-p"><svg class="wt"><use href="#wtri"/></svg></span></div>
    <div class="pill p2">Attributes</div>
  </div>
  <div class="prop-tb">
    <div class="prop-r"><span>Library</span><span>PRELAB-C</span></div>
    <div class="prop-r"><span>Cell</span><span>PowerStripe</span></div>
    <div class="prop-r"><span>View</span><span>schematic</span></div>
    <div class="prop-r"><span>Mode</span><span><svg class="lock-sm"><use href="#lockic"/></svg></span></div>
    <div class="prop-r"><span>Last Saved</span><span>Mon</span></div>
    <div class="prop-r"><span>Locked By</span><span></span></div>
    <div class="prop-r"><span>Units</span><span>inches</span></div>
  </div>
  <div class="hbar-s"><span class="hdl-s"></span></div>
  <div class="stat-s"><span>26(55)</span></div>
</section>

<section class="win win-bottom">
  <div class="bscroll"><i class="bs-a"></i><div class="bs-th"><span class="grip-v"></span></div><i class="bs-a"></i></div>
  <div class="bstrip"></div>
  <div class="bwhite"><div class="bvs"><i></i><i class="dn"></i></div></div>
  <div class="bscroll b2"><i class="bs-a"></i><div class="bs-th"><span class="grip-v"></span></div><i class="bs-a"></i></div>
  <div class="st st-b"><span class="hdl-s"></span><span class="st-l">mouse L: mouseSingleSelectPt()</span><span class="st-m">M: <u>_</u>IceToggleExtractEnableCB()</span><span class="st-r">R: <u>_</u>lxHiMousePopUp()</span></div>
  <div class="cmd cmd-b"><span class="cmd-n">1</span><span class="cmd-p">&gt;</span><span class="cmd-grip"></span></div>
</section>

<section class="win win-main">
  <header class="ttl">
    <i class="dot d-r"></i><i class="dot d-y"></i><i class="dot d-g"></i>
    <svg class="x11 x-main"><use href="#x11"/></svg><span class="ttl-tx act">Virtuoso® Layout Suite EXL Editing: PRELAB-C PowerStripe layout</span>
  </header>
  <div class="menu-row">
    <nav class="menu">
      <span><u>L</u>aunch</span><span><u>F</u>ile</span><span><u>E</u>dit</span><span><u>V</u>iew</span><span><u>C</u>reate</span><span>Ve<u>r</u>ify</span><span>Co<u>n</u>nectivity</span><span><u>O</u>ptions</span><span><u>T</u>ools</span><span><u>W</u>indow</span><span><u>Q</u>uantus</span><span>P<u>l</u>an</span><span><u>P</u>lace</span><span><u>R</u>oute</span><span>Co<u>n</u>current</span><span>E<u>A</u>D</span><span>Pegasus</span><span><u>H</u>elp</span>
    </nav>
    <span class="logo">c<b class="logo-a">a</b>dence</span>
  </div>
  <div class="red"></div>
  <div class="tb-gap"></div>
  <div class="tb tb1">
    <div class="sect sc1"><span class="hdl"></span><svg class="tool"><use href="#folder"/></svg><svg class="tool"><use href="#folderc"/></svg><svg class="tool"><use href="#floppy"/></svg></div>
    <div class="sect sc2"><span class="hdl"></span><svg class="tool n"><use href="#undo"/></svg><svg class="tool n"><use href="#redo"/></svg><i class="vsep"></i><svg class="tool"><use href="#move"/></svg><svg class="tool"><use href="#copy"/></svg><svg class="tool"><use href="#stretch"/></svg><svg class="tool"><use href="#delete"/></svg><svg class="tool"><use href="#copyr"/></svg><svg class="tool"><use href="#info"/></svg><svg class="tool"><use href="#align"/></svg><i class="vsep"></i><svg class="tool snapt"><use href="#snap"/></svg><span class="more m1">»</span></div>
    <div class="sect sc3"><span class="hdl"></span><svg class="tool"><use href="#pin"/></svg><svg class="tool"><use href="#abc"/></svg><svg class="tool"><use href="#term"/></svg><span class="more m2">»</span></div>
    <div class="sect sc4"><span class="hdl"></span><svg class="tool n"><use href="#zoom"/></svg><span class="more m3">»</span></div>
    <div class="sect sc5"><span class="hdl"></span><div class="combo c-cl"><span class="combo-tx">Classic</span><span class="combo-btn"><svg class="wt"><use href="#wtri"/></svg></span></div><svg class="tool n"><use href="#winp"/></svg><svg class="tool n"><use href="#winq"/></svg></div>
    <div class="sect sc6"><span class="hdl"></span><div class="combo c-off"><span class="combo-tx">Off</span><span class="combo-btn"><svg class="wt"><use href="#wtri"/></svg></span></div></div>
  </div>
  <div class="tb tb2">
    <div class="sect sc0"><span class="hdl"></span><svg class="tool"><use href="#sel"/></svg><svg class="tool on"><use href="#route"/></svg><svg class="tool on"><use href="#via"/></svg><svg class="tool"><use href="#cross"/></svg><svg class="tool"><use href="#selfig"/></svg><svg class="tool"><use href="#sellock"/></svg><i class="vsep"></i><svg class="tool"><use href="#stop"/></svg><svg class="tool"><use href="#warnp"/></svg><svg class="tool"><use href="#pole"/></svg><svg class="tool on"><use href="#pen"/></svg><svg class="tool on"><use href="#warnx"/></svg><span class="more m4">»</span></div>
    <div class="sect sc7"><span class="hdl"></span><svg class="tool n2"><use href="#gchip"/></svg><svg class="rt r3"><use href="#tri"/></svg><div class="combo c-inp"><span class="combo-tx"></span><span class="combo-btn"><svg class="wt"><use href="#wtri"/></svg></span></div><svg class="tool n2 g"><use href="#gear"/></svg><svg class="rt r4"><use href="#tri"/></svg><i class="vsep"></i><svg class="tool n2 rvt"><use href="#rv"/></svg></div>
    <div class="sect sc8"><span class="hdl"></span><span class="lbl">Select</span><span class="lbl">Selected Nets</span><span class="lbl">Selected Instances</span><span class="lbl">Selected Objects</span><i class="vsep s9"></i><span class="fld"></span><span class="fld"></span><span class="fld"></span><span class="fld"></span><span class="lbl l2">Dist</span><span class="lbl">Cmd</span></div>
  </div>
  <div class="main-body">
    <aside class="dock">
      <div class="dock-h"><span>Palette</span><i class="db">?</i><i class="db"><em class="fl"></em></i><i class="db">X</i></div>
      <div class="dock-h h2"><span>Layers</span><i class="db"><em class="fl"></em></i><i class="db">X</i></div>
      <div class="chk-row"><svg class="ck"><use href="#cb"/></svg><span>Valid</span><svg class="ck"><use href="#cb0"/></svg><span>Used</span><svg class="ck"><use href="#cb0"/></svg><span>Routing</span></div>
      <div class="flt-row"><span class="fbtn">Filter</span><div class="fbox"><svg class="srch"><use href="#searchic"/></svg><span class="ph">Filter</span><span class="combo-btn"><svg class="wt"><use href="#wtri"/></svg></span></div><svg class="rt r5"><use href="#tri"/></svg></div>
      <div class="lay-combo"><svg class="sw-l"><use href="#s-nwell"/></svg><span>Nwell drawing</span><span class="combo-btn cbl"><svg class="wt"><use href="#wtri"/></svg></span></div>
      <div class="av-row"><span>AV</span><svg class="rt"><use href="#tri"/></svg><span>NV</span><svg class="rt"><use href="#tri"/></svg><span>AS</span><svg class="rt"><use href="#tri"/></svg><span>NS</span><svg class="rt"><use href="#tri"/></svg></div>
      <div class="lib-row-d"><span class="lock-b"><svg class="lock"><use href="#lockic"/></svg></span><span class="gpdk">gpdk045</span></div>
      <div class="name-tb">
        <div class="nt-h"><b class="nt-n">Name</b><span class="nt-c">Vis</span><span class="nt-c">Sel</span></div>
        <div class="nt-r"><span class="all">All Layers</span><i class="pm">+</i><i class="pm">-</i><i class="pm">+</i><i class="pm">-</i></div>
      </div>
      <div class="lt">
        <div class="lt-main">
          <div class="lt-h"><span class="lh0"><svg class="sorttri"><use href="#wtri"/></svg></span><span class="lh1">Layer</span><span class="lh2">Pu...</span><span class="lh3">V</span><span class="lh3">S</span></div>
          <div class="lr sel"><svg class="sw"><use href="#s-nwell"/></svg><span class="ln">Nwell</span><span class="lp">drw</span><svg class="ck"><use href="#cb"/></svg><svg class="ck"><use href="#cb"/></svg></div>
          <div class="lr"><svg class="sw"><use href="#s-oxide"/></svg><span class="ln">Oxide</span><span class="lp">drw</span><svg class="ck"><use href="#cb"/></svg><svg class="ck"><use href="#cb"/></svg></div>
          <div class="lr"><svg class="sw"><use href="#s-oxthk"/></svg><span class="ln">Oxide_thk</span><span class="lp">drw</span><svg class="ck"><use href="#cb"/></svg><svg class="ck"><use href="#cb"/></svg></div>
          <div class="lr"><svg class="sw"><use href="#s-poly"/></svg><span class="ln">Poly</span><span class="lp">drw</span><svg class="ck"><use href="#cb"/></svg><svg class="ck"><use href="#cb"/></svg></div>
          <div class="lr"><svg class="sw"><use href="#s-pimp"/></svg><span class="ln">Pimp</span><span class="lp">drw</span><svg class="ck"><use href="#cb"/></svg><svg class="ck"><use href="#cb"/></svg></div>
          <div class="lr"><svg class="sw"><use href="#s-nhvt"/></svg><span class="ln">Nhvt</span><span class="lp">drw</span><svg class="ck"><use href="#cb"/></svg><svg class="ck"><use href="#cb"/></svg></div>
          <div class="lr"><svg class="sw"><use href="#s-nlvt"/></svg><span class="ln">Nlvt</span><span class="lp">drw</span><svg class="ck"><use href="#cb"/></svg><svg class="ck"><use href="#cb"/></svg></div>
          <div class="lr"><svg class="sw"><use href="#s-nimp"/></svg><span class="ln">Nimp</span><span class="lp">drw</span><svg class="ck"><use href="#cb"/></svg><svg class="ck"><use href="#cb"/></svg></div>
          <div class="lr"><svg class="sw"><use href="#s-phvt"/></svg><span class="ln">Phvt</span><span class="lp">drw</span><svg class="ck"><use href="#cb"/></svg><svg class="ck"><use href="#cb"/></svg></div>
          <div class="lr"><svg class="sw"><use href="#s-plvt"/></svg><span class="ln">Plvt</span><span class="lp">drw</span><svg class="ck"><use href="#cb"/></svg><svg class="ck"><use href="#cb"/></svg></div>
          <div class="lr"><svg class="sw"><use href="#s-nzvt"/></svg><span class="ln">Nzvt</span><span class="lp">drw</span><svg class="ck"><use href="#cb"/></svg><svg class="ck"><use href="#cb"/></svg></div>
          <div class="lr"><svg class="sw"><use href="#s-siprot"/></svg><span class="ln">SiProt</span><span class="lp">drw</span><svg class="ck"><use href="#cb"/></svg><svg class="ck"><use href="#cb"/></svg></div>
          <div class="lr"><svg class="sw"><use href="#s-cont"/></svg><span class="ln">Cont</span><span class="lp">drw</span><svg class="ck"><use href="#cb"/></svg><svg class="ck"><use href="#cb"/></svg></div>
          <div class="lr"><svg class="sw"><use href="#s-m1"/></svg><span class="ln">Metal1</span><span class="lp">drw</span><svg class="ck"><use href="#cb"/></svg><svg class="ck"><use href="#cb"/></svg></div>
          <div class="lr"><svg class="sw"><use href="#s-via1"/></svg><span class="ln">Via1</span><span class="lp">drw</span><svg class="ck"><use href="#cb"/></svg><svg class="ck"><use href="#cb"/></svg></div>
          <div class="lr"><svg class="sw"><use href="#s-m2"/></svg><span class="ln">Metal2</span><span class="lp">drw</span><svg class="ck"><use href="#cb"/></svg><svg class="ck"><use href="#cb"/></svg></div>
          <div class="lr"><svg class="sw"><use href="#s-via2"/></svg><span class="ln">Via2</span><span class="lp">drw</span><svg class="ck"><use href="#cb"/></svg><svg class="ck"><use href="#cb"/></svg></div>
          <div class="lr"><svg class="sw"><use href="#s-m3"/></svg><span class="ln">Metal3</span><span class="lp">drw</span><svg class="ck"><use href="#cb"/></svg><svg class="ck"><use href="#cb"/></svg></div>
          <div class="lr"><svg class="sw"><use href="#s-via3"/></svg><span class="ln">Via3</span><span class="lp">drw</span><svg class="ck"><use href="#cb"/></svg><svg class="ck"><use href="#cb"/></svg></div>
          <div class="lr"><svg class="sw"><use href="#s-m4"/></svg><span class="ln">Metal4</span><span class="lp">drw</span><svg class="ck"><use href="#cb"/></svg><svg class="ck"><use href="#cb"/></svg></div>
          <div class="lr"><svg class="sw"><use href="#s-via4"/></svg><span class="ln">Via4</span><span class="lp">drw</span><svg class="ck"><use href="#cb"/></svg><svg class="ck"><use href="#cb"/></svg></div>
          <div class="lr"><svg class="sw"><use href="#s-m5"/></svg><span class="ln">Metal5</span><span class="lp">drw</span><svg class="ck"><use href="#cb"/></svg><svg class="ck"><use href="#cb"/></svg></div>
          <div class="lr"><svg class="sw"><use href="#s-via5"/></svg><span class="ln">Via5</span><span class="lp">drw</span><svg class="ck"><use href="#cb"/></svg><svg class="ck"><use href="#cb"/></svg></div>
          <div class="lr"><svg class="sw"><use href="#s-m6"/></svg><span class="ln">Metal6</span><span class="lp">drw</span><svg class="ck"><use href="#cb"/></svg><svg class="ck"><use href="#cb"/></svg></div>
          <div class="lr"><svg class="sw"><use href="#s-m6"/></svg><span class="ln"></span><span class="lp"></span><svg class="ck"><use href="#cb"/></svg><svg class="ck"><use href="#cb"/></svg></div>
        </div>
        <div class="lt-vs"><i class="vs-cap"></i><div class="vs-thumb"><span class="grip-h"></span></div><div class="vs-track"></div><i class="vs-cap dn"></i></div>
      </div>
      <div class="dock-h h3"><span>Objects</span><i class="db"><em class="fl"></em></i><i class="db">X</i></div>
      <div class="obj">
        <div class="obj-main">
          <div class="obj-h"><b>Objects</b><span class="lh3">V</span><span class="lh3">S</span></div>
          <div class="obj-r"><i class="tree"></i><span>Instances</span><svg class="ck"><use href="#cb"/></svg><svg class="ck"><use href="#cb"/></svg></div>
        </div>
        <div class="obj-vs"><i class="vs-cap"></i><i class="vs-mid"></i><i class="vs-cap dn"></i></div>
      </div>
      <div class="tabs"><span class="tab act">Objects</span><span class="tab">Grids</span></div>
    </aside>
    <div class="gutter"></div>
    <div class="cv-col">
      <div class="red r5px"></div>
      <svg class="canvas" viewBox="604 360 2459 1416">
        <defs>
          <pattern id="pp" width="32" height="32" patternUnits="userSpaceOnUse" x="1468" y="424"><rect width="3" height="3" fill="#a000e0"/></pattern>
          <pattern id="pr" width="16" height="16" patternUnits="userSpaceOnUse" x="1517" y="431"><path d="M1 1h3v3H1zM9 1h3v3H9zM5 6h3v2H5zM13 6h3v2h-3zM1 9h3v3H1zM9 9h3v3H9zM5 14h3v2H5zM13 14h3v2h-3z" fill="#f00"/></pattern>
          <pattern id="pb" width="8" height="10" patternUnits="userSpaceOnUse" x="1450" y="467"><path d="M1 1h4v3H1zM5 6h3v3H5z" fill="#00f"/></pattern>
          <pattern id="py" width="32" height="32" patternUnits="userSpaceOnUse" x="1450" y="799"><path d="M1 31h3v-1h-3zM7 25h3v-3h-3zM14 18h3v-3h-3zM20 12h3V9h-3zM27 5h3V2h-3zM15 16h6v2h-6zM14 16h2v6h-2z" fill="#ff0"/></pattern>
          <pattern id="pbr" width="32" height="32" patternUnits="userSpaceOnUse" x="1450" y="1617"><path d="M0 0l32 32" stroke="#b04020" stroke-width="2" stroke-dasharray="3 3"/></pattern>
        </defs>
        <rect x="604" y="360" width="2459" height="1416" fill="#000"/>
        <rect class="nd" x="1451" y="432" width="303" height="359" fill="url(#pp)" stroke="#a000e0" stroke-width="3"/>
        <rect class="nd" x="1451" y="800" width="303" height="816" fill="#000"/>
        <rect class="nd" x="1451" y="1617" width="303" height="90" fill="#000" stroke="#c04020" stroke-width="3"/>
        <rect class="nd" x="1451" y="1631" width="303" height="72" fill="url(#pb)" stroke="#00f" stroke-width="3"/>
        <rect class="nd" x="1451" y="1617" width="303" height="90" fill="url(#pbr)"/>
        <rect class="nd" x="1451" y="467" width="303" height="70" fill="url(#pb)" stroke="#00f" stroke-width="3"/>
        <path class="nd" d="M1495 468v68M1711 468v68M1495 1632v68M1703 1632v68" stroke="#e02020" stroke-width="2" stroke-dasharray="7 4"/>
        <rect class="nd" x="1518" y="432" width="47" height="1276" fill="url(#pr)" stroke="#f00" stroke-width="3"/>
        <rect class="nd" x="1640" y="432" width="45" height="1276" fill="url(#pr)" stroke="#f00" stroke-width="3"/>
        <rect class="nd" x="1451" y="462" width="303" height="99" fill="url(#py)" stroke="#ff0" stroke-width="3"/>
        <rect class="nd" x="1451" y="800" width="303" height="816" fill="url(#py)" stroke="#ff0" stroke-width="3"/>
        <path class="nd" d="M1518 468v100M1565 468v100M1640 462v108M1685 462v108M1518 1560v146M1565 1560v146M1640 1560v146M1685 1560v146" stroke="#f00" stroke-width="3"/>
        <rect class="nd" x="1522" y="490" width="37" height="82" fill="#000"/>
        <rect class="nd" x="1648" y="480" width="32" height="92" fill="#000"/>
        <rect class="nd" x="1522" y="1562" width="37" height="102" fill="#000"/>
        <rect class="nd" x="1644" y="1562" width="36" height="128" fill="#000"/>
        <rect class="nd" x="1568" y="1650" width="70" height="40" fill="#000"/>
        <rect class="nd" x="1684" y="1650" width="22" height="40" fill="#000"/>
        <rect class="nd" x="1522" y="478" width="40" height="48" fill="#000"/>
        <rect class="nd" x="1520" y="478" width="4" height="48" fill="#3ab4ff"/><rect class="nd" x="1560" y="478" width="4" height="48" fill="#3ab4ff"/>
        <rect class="nd" x="1640" y="1648" width="6" height="42" fill="#3ab4ff"/><rect class="nd" x="1676" y="1645" width="8" height="45" fill="#3ab4ff"/>
        <rect class="nd" x="1524" y="1664" width="27" height="24" fill="#fff"/>
        <rect class="nd" x="1524" y="1664" width="27" height="24" fill="url(#pb)"/>
        <rect class="nd" x="1520.5" y="496.5" width="41" height="6" fill="none" stroke="#808080" stroke-width="2"/>
        <rect class="nd" x="1641.5" y="1667.5" width="42" height="6" fill="none" stroke="#808080" stroke-width="2"/>
        <path class="nd" d="M1483 360v101M1483 1667v109M604 1667h879M1755 1667h1308" stroke="#fff" stroke-width="2"/>
        <path class="nd" d="M1483 461v1206M1483 1667h272" stroke="#ff0" stroke-width="2"/>
        <path class="nd" d="M1483 503h272" stroke="#0ff" stroke-width="2"/>
        <path class="nd" d="M1450 1443h305M1451 1426v17M1754 1426v17M1509 1436v7M1568 1436v7M1627 1436v7M1686 1436v7M1745 1436v7" stroke="#ff7f00" stroke-width="2"/>
        <text class="lb-or" x="1446" y="1410">0</text>
        <text class="lb-or" x="1766" y="1410">0. 52</text>
        <text class="lb" x="1500" y="516">vdd!</text>
        <text class="lb" x="1556" y="516">vdd!</text>
        <text class="lb" x="1562" y="627">vdd!</text>
        <text class="lb" transform="translate(1558 570) rotate(-90)">vdd!</text>
        <text class="lb" transform="translate(1677 570) rotate(-90)">gnd!</text>
        <text class="lb" transform="translate(1558 1664) rotate(-90)">vdd!</text>
        <text class="lb" transform="translate(1677 1642) rotate(-90)">gnd!</text>
        <text class="lb" transform="translate(1677 1692) rotate(-90) scale(.6)">gnd!</text>
        <text class="lb" x="1560" y="1680">gnd!</text>
        <text class="lb" x="1628" y="1680">gnd!</text>
      </svg>
    </div>
  </div>
  <div class="tb tb3"><span class="hdl"></span><svg class="tool"><use href="#t1"/></svg><svg class="tool"><use href="#t2"/></svg><svg class="tool"><use href="#t3"/></svg><svg class="tool"><use href="#t4"/></svg><svg class="tool"><use href="#t5"/></svg><svg class="tool"><use href="#t6"/></svg><svg class="tool"><use href="#t7"/></svg><svg class="tool"><use href="#t8"/></svg><svg class="tool"><use href="#t9"/></svg><svg class="tool"><use href="#t10"/></svg><svg class="tool"><use href="#t11"/></svg><svg class="tool"><use href="#t12"/></svg><svg class="tool"><use href="#t13"/></svg><svg class="tool"><use href="#t14"/></svg><svg class="tool"><use href="#t15"/></svg><svg class="tool"><use href="#t16"/></svg><svg class="tool"><use href="#t17"/></svg><svg class="tool"><use href="#t18"/></svg><svg class="tool"><use href="#t19"/></svg></div>
  <div class="tb tb4"><span class="hdl"></span></div>
  <div class="st"><span class="hdl-s"></span><span class="st-l">mouse L: mouseSingleSelectPt()</span><span class="st-m">M: <u>_</u>IceToggleExtractEnableCB()</span><span class="st-r">R: <u>_</u>lxHiMousePopUp()</span></div>
  <div class="cmd"><span class="cmd-n pink">25(54)</span><span class="cmd-p">&gt;</span><span class="cmd-grip"></span></div>
</section>
</div>
</body>
</html>
```
FILE: styles.css
```css
*{box-sizing:border-box}
html,body{margin:0;padding:0;background:#333}
body{font:21.6px/1.2 "Noto Sans","Open Sans",sans-serif;color:#2a2a2a}
.defs{position:absolute}
.desktop{position:relative;width:3456px;height:2234px;overflow:hidden}
.wallpaper{position:absolute;left:0;top:0;display:block}
.win{position:absolute;background:#f0f0f0;display:flex;flex-direction:column;box-shadow:0 4px 26px rgba(0,0,0,.85)}
.win-term{left:0;top:74px;width:1148px;height:60px;border-radius:14px 14px 0 0;background:#f4f4f4}
.win-lib{left:1873px;top:74px;width:1583px;height:1169px;border-radius:14px 0 0 0;background:#f2f2f2}
.win-schem{left:2px;top:118px;width:300px;height:1540px;border-radius:8px 0 0 0}
.win-bottom{left:934px;top:1975px;width:1588px;height:204px}
.win-main{left:242px;top:128px;width:2821px;height:1849px;border-radius:12px 12px 0 0;box-shadow:0 6px 26px rgba(0,0,0,.9)}

.ttl{height:44px;flex:none;display:flex;align-items:center;padding-left:15px;gap:17px;background:linear-gradient(#f6f6f6,#d2d2d2);border-bottom:2px solid #aaa;border-radius:12px 12px 0 0;position:relative}
.ttl-in{background:#f5f5f5;border-bottom:3px solid #d4d4d4}
.ttl-s{height:45px;padding-left:16px}
.win-term .ttl,.win-lib .ttl{padding-left:17px}
.dot{width:24px;height:24px;border-radius:50%;flex:none}
.d-in{background:#cfcfcf;border:1px solid #bdbdbd}
.d-r{background:#ef6a5e}.d-y{background:#f5bd4f}.d-g{background:#60c455}
.x11{position:absolute;width:26px;height:30px;top:7px}
.x-term{left:293px}.x-lib{left:365px;}.x-sch{left:137px}.x-main{left:963px}
.ttl-tx{position:absolute;top:7px;font-weight:600;font-size:27px;white-space:nowrap;line-height:32px}
.ttl-tx.act{left:1006px;color:#1c1c1c}
.ttl-tx.in{color:#6e6e6e}
.win-term .ttl-tx{left:333px}
.win-lib .ttl-tx{left:410px}
.win-schem .ttl-tx{left:176px}

.menu-row{height:48px;flex:none;background:#f3f3f3;display:flex;align-items:center;justify-content:space-between;padding:3px 15px 0 18px}
.menu{display:flex;gap:26px;font-size:21.6px;color:#2a2a2a;white-space:nowrap}
.menu-s{height:49px;flex:none;padding:7px 0 0 18px;background:#f3f3f3;align-items:center}
.red{height:8px;background:#cc0000;flex:none}
.r5px{height:5px}
.logo{font-size:34px;line-height:34px;letter-spacing:8.5px;color:#222;font-family:"Liberation Sans",sans-serif;position:relative;transform:scaleX(.8);transform-origin:right center;display:inline-block;margin-right:-7px;padding-top:2px}
.logo-a{font-weight:400;position:relative}
.logo-a::before{content:"";position:absolute;left:4px;top:0;width:11px;height:4px;background:#cc2222}
.logo-row{display:flex;justify-content:flex-end;flex:none}
.logo-lib{height:46px;padding:4px 4px 0 0;align-items:center;background:#f2f2f2}

.tb-gap{height:9px;flex:none;background:#ececec}
.tb{display:flex;align-items:center;flex:none;background:linear-gradient(#ebebeb,#aeaeae);border-bottom:3px solid #8f8f8f}
.tb-s1{height:57px;margin-top:10px;padding-left:5px;border-radius:0 0 6px 6px}
.tb-s2{height:64px;margin-top:1px;padding-left:5px;border-radius:0 0 6px 6px}
.tb1{height:58px;background:none;align-items:stretch;border:0}
.tb2{height:60px;background:none;align-items:stretch;border:0}
.sect{display:flex;align-items:center;background:linear-gradient(#ebebeb,#aeaeae);border-bottom:3px solid #8f8f8f;border-right:1px solid #999;border-radius:0 0 6px 6px;position:relative}
.tb2 .sect{padding-top:2px}
.sc1{width:202px;padding-left:5px}
.sc2{width:702px;padding-left:5px}
.sc3{width:255px;padding-left:5px}
.sc4{width:131px;padding-left:5px}
.sc5{width:430px;padding-left:5px}
.sc6{flex:1;padding-left:5px}
.sc0{width:750px;padding-left:5px}
.sc7{width:498px;padding-left:5px}
.sc8{flex:1;padding-left:5px}
.hdl{width:9px;height:44px;flex:none;border-left:2px solid #999;border-right:2px solid #999;position:relative;margin-right:2px}
.hdl::after{content:"";position:absolute;left:1.5px;top:0;bottom:0;width:2px;background:#aaa}
.tool{width:62px;height:40px;flex:none}
.tb2 .tool{height:48px}
.tool.n{width:61px}
.tool.s{width:64px}
.tool.n2{width:56px}
.tool.b{width:42px;height:42px}
.tool.g{margin-left:11px}
.tool.rvt{margin-left:5px}
.tool.snapt{margin-left:4px}
.mr{margin:0 0 0 0}
.tb2 .tool.on{background:linear-gradient(#9c9c9c,#b4b4b4);border-radius:8px;height:56px;width:60px;margin:0 1px;padding:4px 0}
.vsep{width:2px;height:40px;background:#6e6e6e;flex:none;margin:0 1px}
.more{font-weight:700;width:50px;text-align:center;font-size:24px;color:#111;flex:none}
.m1{margin-left:12px}.m2{margin-left:12px}.m3{margin-left:6px}.m4{margin-left:8px}
.combo{display:flex;height:40px;background:#fff;border-radius:7px;border-top:2px solid #aaa;border-bottom:3px solid #777;overflow:hidden;flex:none}
.combo-tx{flex:1;padding:4px 0 0 3px;line-height:28px}
.combo-btn{width:32px;background:linear-gradient(#d30000,#8e0000);display:flex;align-items:center;justify-content:center;flex:none;border-radius:0 6px 6px 0}
.wt{width:14px;height:9px}
.rt{width:16px;height:10px;flex:none}
.rt2{width:16px;height:10px;flex:none}
.c-cl{width:285px}
.c-off{width:217px}
.c-inp{width:229px}
.r3{margin:0 8px 0 5px}.r4{margin:0 2px 0 6px}
.lbl{margin-left:16px;white-space:nowrap;font-size:21.6px;color:#2c2c2c;flex:none}
.sc8 .hdl + .lbl{margin-left:5px}
.l2{margin-left:12px}
.lbl + .lbl{margin-left:22px}
.s9{margin-left:17px;margin-right:20px}
.fld{width:130px;height:44px;background:#fbfbfb;border-radius:6px;border-top:2px solid #aaa;flex:none;margin-right:18px}
.fld:nth-of-type(9){margin-right:0}

.main-body{display:flex;height:1421px;flex:none}
.dock{width:350px;flex:none;background:#f0f0f0;display:flex;flex-direction:column;overflow:hidden;padding-top:3px}
.gutter{width:12px;flex:none;background:#cfcfcf}
.cv-col{flex:1;display:flex;flex-direction:column;min-width:0}
.canvas{display:block;width:2459px;height:1416px;shape-rendering:crispEdges;flex:none}
.lb{font:300 42px "Lato","Liberation Sans",sans-serif;letter-spacing:2px;fill:#fff;shape-rendering:auto}
.lb-or{font:24px "Liberation Sans",sans-serif;letter-spacing:1px;fill:#ff7f00}

.dock-h{height:37px;flex:none;display:flex;align-items:center;gap:2px;background:linear-gradient(#f0f0f0,#a6a6a6);border-bottom:3px solid #666;padding-right:2px;border-radius:2px;font-weight:700;color:#1a1a1a;font-size:21.6px;position:relative}
.dock-h span{flex:1;padding-left:26px}
.h2{margin-top:4px}
.h3{margin-top:22px}
.nav-h{height:36px;margin-top:0;padding-top:2px}
.nav-h span{padding-left:27px}
.db{width:25px;height:28px;flex:none;border:1px solid #a8a8a8;border-radius:7px;font-style:normal;font-weight:400;text-align:center;font-size:24px;line-height:25px;color:#111;background:#e6e6e6;position:relative}
.fl{position:absolute;left:6px;top:9px;width:10px;height:10px;border:2px solid #111}
.fl::after{content:"";position:absolute;left:3px;top:-6px;width:10px;height:10px;border:2px solid #111}
.chk-row{height:40px;flex:none;display:flex;align-items:center;padding-left:2px;border-bottom:2px solid #ddd}
.chk-row .ck{margin-right:10px}
.chk-row span{margin-right:14px}
.ck{width:26px;height:26px;flex:none}
.flt-row{height:42px;flex:none;display:flex;align-items:center;padding-top:2px;border-bottom:2px solid #ddd}
.fbtn{width:60px;height:36px;border:1px solid #aaa;border-radius:18px;background:linear-gradient(#f2f2f2,#c8c8c8);text-align:center;line-height:34px;font-size:21px;flex:none}
.fbox{width:246px;margin-left:4px;height:36px;background:#fff;border-radius:8px 8px 6px 8px;border-bottom:2px solid #888;display:flex;align-items:center;flex:none;overflow:hidden}
.fbox .combo-btn{height:100%}
.srch{width:28px;height:30px;margin-left:4px;flex:none}
.ph{flex:1;color:#c9c9c9;font-weight:600;padding-left:7px}
.r5{margin-left:10px}
.lay-combo{height:38px;flex:none;margin:1px 2px 0;display:flex;align-items:center;background:linear-gradient(#f4f4f4,#c6c6c6);border-bottom:2px solid #888;border-radius:5px}
.lay-combo span:first-of-type{flex:1;padding-left:6px}
.sw-l{width:34px;height:36px;margin-left:4px;flex:none}
.cbl{height:36px}
.av-row{height:43px;flex:none;display:flex;align-items:center;justify-content:space-between;padding:4px 1px 0 20px;border-bottom:2px solid #ddd;font-size:21px}
.lib-row-d{height:40px;flex:none;display:flex;align-items:center;gap:2px;padding-top:2px}
.lock-b{width:38px;height:38px;flex:none;border:1px solid #bbb;border-radius:50%;display:flex;align-items:center;justify-content:center;background:#ddd}
.lock{width:22px;height:30px}
.gpdk{flex:1;height:38px;border:1px solid #bbb;border-radius:19px;text-align:center;line-height:34px;background:linear-gradient(#f5f5f5,#cfcfcf);margin-right:1px}
.name-tb{height:73px;flex:none;margin:1px 3px 0;border-top:3px solid #111;border-left:3px solid #111;overflow:hidden}
.nt-h{height:36px;display:flex;background:linear-gradient(#bcbcbc,#9b9b9b);align-items:center;text-align:center}
.nt-n{width:212px;border-right:2px solid #888;color:#111}
.nt-c{width:64px;border-right:2px solid #888}
.nt-r{height:36px;display:flex;align-items:center;gap:3px;background:#fff}
.all{width:208px;height:32px;margin:0 2px 0 1px;background:linear-gradient(#b4b4b4,#9c9c9c);border-radius:7px;color:#f4f4f4;text-align:center;line-height:30px}
.pm{width:29px;height:32px;border:1px solid #bbb;border-radius:7px;font-style:normal;text-align:center;line-height:30px;background:#f6f6f6;flex:none}
.lt{height:859px;flex:none;margin:17px 4px 0 3px;border-top:4px solid #111;border-left:3px solid #111;display:flex;overflow:hidden;background:#fff}
.lt-main{width:307px;flex:none;overflow:hidden}
.lt-h{height:33px;display:flex;align-items:center;background:linear-gradient(#bdbdbd,#9d9d9d);text-align:center;font-size:21px;color:#2a2a2a}
.lh0{width:32px;border-right:2px solid #8a8a8a;display:flex;align-items:center;justify-content:center;height:100%}
.lh1{width:129px;border-right:2px solid #8a8a8a}
.lh2{width:59px;border-right:2px solid #8a8a8a}
.lh3{width:43px;border-right:2px solid #8a8a8a;flex:none}
.sorttri{width:14px;height:9px;transform:rotate(180deg)}
.lr{height:34px;display:flex;align-items:center;background:#fff;padding-left:2px;color:#333}
.sw{width:30px;height:30px;flex:none}
.ln{width:137px;padding-left:6px;flex:none;white-space:nowrap}
.lp{width:65px;flex:none}
.lr .ck{margin-right:17px}
.lr.sel{outline:4px solid #000;outline-offset:-4px;position:relative}
.lt-vs{width:31px;flex:none;background:#979797;display:flex;flex-direction:column;margin-left:-5px;position:relative}
.vs-cap{display:block;height:31px;flex:none;background:linear-gradient(#ececec,#c8c8c8);border-bottom:2px solid #888;position:relative}
.vs-cap::after{content:"";position:absolute;left:8px;top:8px;border-left:8px solid transparent;border-right:8px solid transparent;border-bottom:13px solid #f8f8f8}
.vs-cap.dn{border-bottom:0;border-top:2px solid #ccc}
.vs-cap.dn::after{border-bottom:0;border-top:13px solid #f8f8f8}
.vs-thumb{height:108px;flex:none;background:linear-gradient(90deg,#e2e2e2,#bdbdbd);border-radius:14px;border:1px solid #aaa;display:flex;align-items:center;justify-content:center}
.vs-track{flex:1}
.grip-h{display:block;width:13px;height:17px;background:repeating-linear-gradient(#777 0 1px,transparent 1px 3px)}
.grip-v{display:block;width:17px;height:14px;background:repeating-linear-gradient(90deg,#777 0 1px,transparent 1px 3px)}
.obj{height:80px;flex:none;margin:0 4px 0 3px;border-top:3px solid #111;border-left:3px solid #111;display:flex;overflow:hidden;background:#fff}
.obj-main{width:307px;flex:none}
.obj-h{height:34px;display:flex;align-items:center;background:linear-gradient(#bcbcbc,#9e9e9e);text-align:center}
.obj-h b{width:220px;color:#111;border-right:2px solid #888;flex:none}
.obj-r{height:36px;display:flex;align-items:center;padding-left:22px;background:#fff}
.tree{width:18px;height:36px;border-left:2px dotted #666;flex:none;position:relative;margin-right:6px}
.tree::after{content:"";position:absolute;left:0;top:17px;width:16px;border-top:2px dotted #666}
.obj-r span{flex:none;width:188px}
.obj-r .ck{margin-right:17px}
.obj-vs{width:31px;margin-left:-5px;display:flex;flex-direction:column;background:#aaa;position:relative}
.vs-mid{height:14px;background:repeating-linear-gradient(#777 0 1px,#ccc 1px 3px)}
.tabs{height:44px;flex:none;margin-top:3px;display:flex;border-top:3px solid #111;background:#f0f0f0}
.tab{padding:6px 16px 0 16px;color:#444}
.tab.act{width:110px;padding-left:16px;border-right:2px solid #bbb;margin-right:1px}
.tab:not(.act){background:#cfcfcf;width:86px}

.tb3{height:59px;margin-top:1px;gap:0;padding-left:5px;border-radius:0 0 5px 5px}
.tb4{height:59px;padding-left:5px;border-radius:0 0 5px 5px}
.st{height:36px;flex:none;display:flex;align-items:center;background:linear-gradient(#ececec,#b2b2b2);border-bottom:3px solid #8f8f8f;padding-left:5px;position:relative;white-space:nowrap}
.hdl-s{width:7px;height:18px;background:repeating-linear-gradient(90deg,#888 0 1px,transparent 1px 2.5px);flex:none;margin-right:2px}
.st-l{flex:none}
.st-m{position:absolute;left:1253px}
.st-r{position:absolute;right:18px}
.cmd{height:43px;flex:none;display:flex;align-items:stretch;background:#f0f0f0;border-top:3px solid #fafafa;position:relative;border-bottom:2px solid #777}
.cmd-n{padding:7px 0 0 3px;width:79px;border-right:2px solid #555;flex:none;white-space:nowrap}
.pink{background:#f7d6d6}
.cmd-p{padding:7px 0 0 16px;color:#555}
.cmd-grip{position:absolute;right:0;bottom:0;width:28px;height:32px;background:linear-gradient(135deg,#fff 55%,#aaa 55% 60%,#fff 60% 70%,#aaa 70% 75%,#fff 75%);border-left:1px solid #ccc}

.bscroll{height:33px;flex:none;display:flex;background:#f0f0f0;padding:2px 36px 0 4px;margin-top:2px}
.bs-a{width:30px;flex:none;background:linear-gradient(#999,#ccc);border-bottom:3px solid #444}
.bs-th{flex:1;background:linear-gradient(#4a4a4a,#a8a8a8);border-radius:10px;border-bottom:4px solid #666;display:flex;align-items:center;justify-content:center}
.b2 .bs-th{background:#b6b6b6;border-bottom:4px solid #999;}
.b2 .bs-a{background:linear-gradient(#e2e2e2,#ccc)}
.bstrip{height:19px;flex:none;background:linear-gradient(#e8e8e8,#f0f0f0 30%,#d4d4d4 60%,#bbb);border-bottom:3px solid #111}
.bwhite{height:33px;flex:none;background:#fff;position:relative;display:flex;justify-content:flex-end;padding-right:4px}
.bvs{width:30px;display:flex;flex-direction:column}
.bvs i{height:16px;background:linear-gradient(#f0f0f0,#bbb);border-bottom:2px solid #555;display:block}
.bvs i.dn{background:linear-gradient(#bbb,#f0f0f0)}
.b2{height:32px;margin-top:0;padding-top:0;background:#fff}
.st-b{margin-top:3px;height:37px;padding-top:2px}
.st-b .st-m{left:637px}
.st-b .st-r{right:14px}
.cmd-b{height:42px}
.cmd-b .cmd-n{width:30px;padding-left:5px}

.nav-body{flex:none;height:784px;background:#f0f0f0;position:relative}
.nav-ttl{height:67px;display:flex;flex-direction:column;align-items:flex-start;padding:8px 0 0 120px;border-bottom:2px solid #c4c4c4;line-height:28px;white-space:nowrap}
.nav-ttl b{font-weight:700;color:#222;font-size:23px}
.nav-ttl span{padding-left:6px;font-size:21px}
.nav-sec{display:flex;align-items:center;height:34px;margin-top:9px;padding-left:5px;color:#222}
.nav-sec b{margin-left:7px}
.s2{margin-top:13px}
.s3{margin-top:12px}
.nav-it{height:36px;line-height:36px;padding-left:27px;font-size:21px;color:#333;white-space:nowrap}
.nav-pm{position:absolute;left:10px;top:750px;display:flex;gap:22px;color:#444}
.dim{color:#aaa}
.prop-h span{padding-left:27px}
.prop-combos{height:58px;flex:none;display:flex;gap:6px;padding:10px 0 0 7px;background:#f0f0f0}
.pill{width:170px;height:41px;border:2px solid #c2c2c2;border-radius:10px;display:flex;align-items:center;background:linear-gradient(#efefef,#dcdcdc);overflow:hidden;flex:none;font-size:21px;white-space:nowrap;color:#444}
.smic{width:34px;height:30px;margin:0 6px 0 4px;flex:none}
.pill span:first-of-type{flex:1}
.cb-p{height:100%;width:32px}
.p2{padding-left:4px;width:120px}
.prop-tb{height:299px;flex:none;margin-left:7px;border:3px solid #111;border-width:3px 0 0 3px;background:#fff}
.prop-r{height:36px;display:flex;background:#e4e4e4;border-bottom:2px solid #f2f2f2;align-items:center;color:#444;font-size:21px;white-space:nowrap}
.prop-r span:first-child{width:197px;padding-left:45px;border-right:2px solid #f0f0f0;height:100%;line-height:34px;flex:none}
.prop-r span:last-child{padding-left:8px}
.lock-sm{width:22px;height:28px;display:block}
.hbar-s{height:40px;flex:none;background:linear-gradient(#f3f3f3,#b8b8b8);margin-top:5px;border-bottom:3px solid #999;display:flex;align-items:center;padding-left:8px;border-radius:0 0 4px 4px}
.stat-s{height:43px;flex:none;background:#f2f2f2;padding:8px 0 0 3px;position:relative}
.stat-s span{display:block;width:77px;border-right:2px solid #777;margin-top:-8px;padding-top:8px;height:43px}

.lib-body{margin-left:1190px;display:flex;flex-direction:column;flex:1;background:#f2f2f2}
.lib-rule{height:84px;flex:none;border-bottom:2px solid #c8c8c8;margin:0 -10px 0 -100px}
.lib-combo-row{height:44px;flex:none;display:flex;align-items:center;margin-top:0;padding-top:0}
.lib-combo-row:nth-child(2){margin-top:20px;height:44px}
.lib-combo-row:nth-child(3){height:45px;margin-top:2px}
.combo-lib{width:347px;margin-right:19px;height:42px}
.lib-combo-row .rt{margin:0}
.lib-table{margin-top:7px;height:502px;flex:none;border-top:3px solid #111;display:flex;flex-direction:column;width:385px;background:#fff}
.lib-head{height:36px;display:flex;background:linear-gradient(#bbb,#9d9d9d);flex:none}
.lib-c1{width:67px;flex:none;white-space:nowrap;border-right:2px solid #c4c4c4;overflow:hidden;height:100%;line-height:33px;direction:rtl}
.lib-c2{flex:1;padding-left:7px;white-space:nowrap;line-height:33px;height:100%;overflow:hidden}
.lib-h-sort{display:flex;align-items:center;justify-content:flex-end;padding-right:14px;border-right:2px solid #888}
.lib-h-lock{text-align:center;font-weight:700;color:#111}
.lib-row{height:36px;display:flex;flex:none;border-bottom:2px solid #ccc;background:#fff;color:#222}
.lib-sel{background:#808080;border:0}
.lib-sel-c{border:3px solid #111;border-left:0;border-top:2px solid #111;background:linear-gradient(90deg,#999,#808080)}
.lib-sel-l{color:#eee;margin-left:2px}
.e1{padding-right:19px}.e2{padding-right:30px}.e3{padding-right:60px}
.lib-fill{flex:1;background:#fff}
.lib-hs{height:32px;display:flex;background:#939393;flex:none;align-items:stretch}
.lib-hs-th{width:205px;background:linear-gradient(#cecece,#aaa);border-radius:0 16px 16px 0;display:flex;align-items:center;justify-content:flex-start;padding-left:50px;flex:none}
.lib-hs-tr{flex:1}
.lib-arrow{width:31px;flex:none;background:linear-gradient(#eee,#c4c4c4);border-bottom:2px solid #888;position:relative}
.lib-arrow::after{content:"";position:absolute;left:8px;top:7px;border-top:8px solid transparent;border-bottom:8px solid transparent;border-left:14px solid #f8f8f8}
.lib-lower{display:flex;margin-top:30px;flex:none;height:289px;position:relative}
.lib-lower-l{width:195px;flex:none;position:relative}
.lib-lrule{border-top:2px solid #c8c8c8;margin-top:9px}
.lib-box{margin-top:18px;height:209px;border-top:3px solid #111;display:flex;width:185px}
.lib-box-w{width:150px;background:#fff;flex:none}
.lib-vs{width:32px;flex:none;margin-left:2px;display:flex;flex-direction:column}
.vs-th{flex:1;background:linear-gradient(90deg,#ddd,#aaa);border-radius:16px;display:block}
.lib-hs2{height:32px;display:flex;width:150px}
.lib-hs2-th{flex:1;background:linear-gradient(#c9c9c9,#aaa);border-radius:0 14px 14px 0}
.a2{width:30px}
.preview{width:196px;height:289px;background:#000;flex:none;margin-left:0}
.prev-svg{display:block;width:196px;height:289px}
.lib-status{display:flex;height:48px;padding:9px 0 0 80px;gap:6px;flex:none;white-space:nowrap;font-size:21.6px}
.lib-f{height:32px;border:1px solid #ccc;border-left:2px solid #555;border-top:2px solid #555;background:#f6f6f6;padding:0 3px;line-height:28px;flex:none}
.lf1{width:147px}.lf2{width:133px}
.lib-grip{width:20px;height:32px;background:#fff;margin-left:8px}

.tx-r{font:700 19px "Liberation Sans",sans-serif;fill:#222}
.tx-i{font:700 32px "Liberation Serif",serif;fill:#fff;text-anchor:middle}
.tx-abc{font:22px "Noto Sans",sans-serif;fill:#9a9a9a;text-anchor:middle}
.tx-rv1{font:700 34px "Liberation Sans",sans-serif;fill:#e49a9a}
.tx-rv2{font:700 34px "Liberation Sans",sans-serif;fill:#9a8ee6}
```
